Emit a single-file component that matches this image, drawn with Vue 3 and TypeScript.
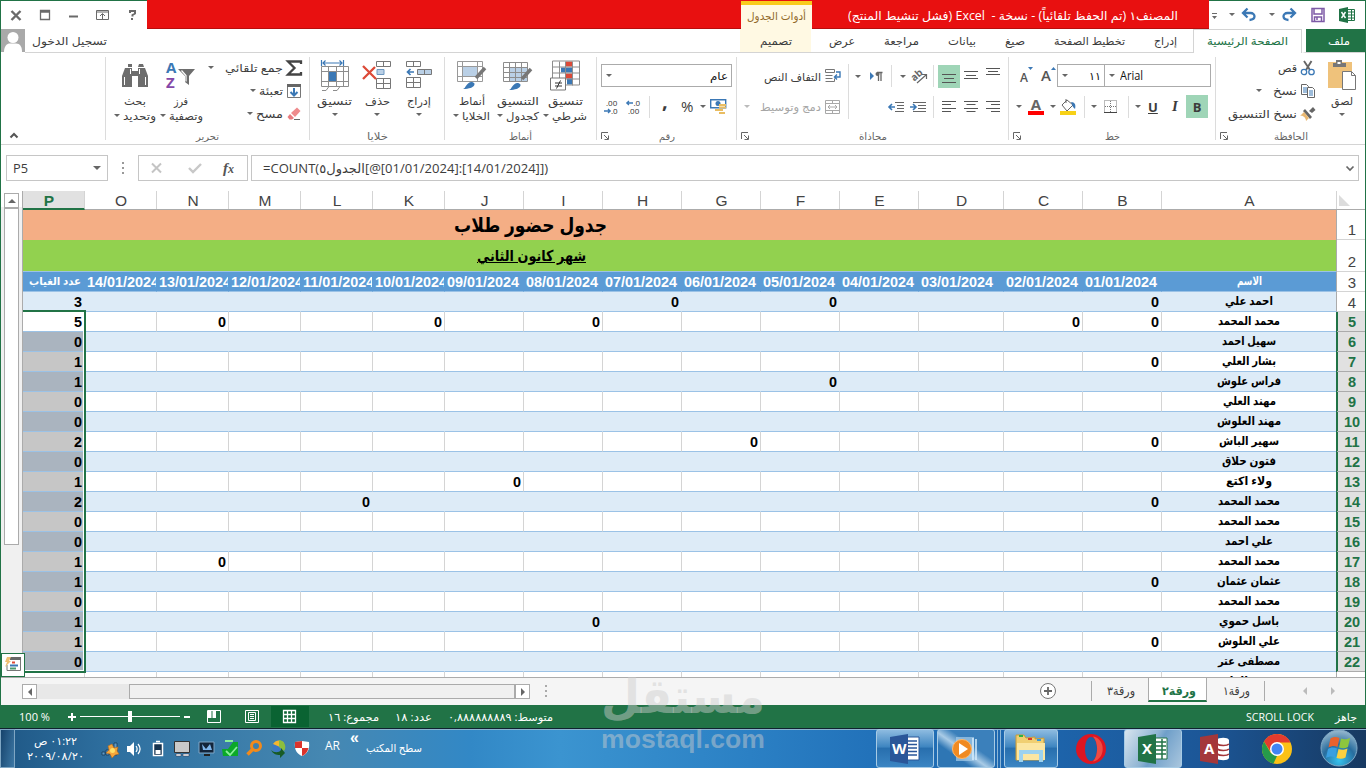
<script setup lang="ts">
interface Row {
  n: number
  name: string
  total: string
  zeros: string
}

const columns = ['P', 'O', 'N', 'M', 'L', 'K', 'J', 'I', 'H', 'G', 'F', 'E', 'D', 'C', 'B', 'A']
const dayColumns = columns.slice(1, 15)

const dates = dayColumns.map((_, i) => {
  const day = String(14 - i).padStart(2, '0')
  return `${day}/01/2024`
})

// zeros lists the columns in which the student was absent
const rows: Row[] = [
  { n: 4, name: 'احمد علي', total: '3', zeros: 'HFB' },
  { n: 5, name: 'محمد المحمد', total: '5', zeros: 'NKICB' },
  { n: 6, name: 'سهيل احمد', total: '0', zeros: '' },
  { n: 7, name: 'بشار العلي', total: '1', zeros: 'B' },
  { n: 8, name: 'فراس علوش', total: '1', zeros: 'F' },
  { n: 9, name: 'مهند العلي', total: '0', zeros: '' },
  { n: 10, name: 'مهند العلوش', total: '0', zeros: '' },
  { n: 11, name: 'سهير الباش', total: '2', zeros: 'GB' },
  { n: 12, name: 'فتون حلاق', total: '0', zeros: '' },
  { n: 13, name: 'ولاء اكتع', total: '1', zeros: 'J' },
  { n: 14, name: 'محمد المحمد', total: '2', zeros: 'LB' },
  { n: 15, name: 'محمد المحمد', total: '0', zeros: '' },
  { n: 16, name: 'علي احمد', total: '0', zeros: '' },
  { n: 17, name: 'محمد المحمد', total: '1', zeros: 'N' },
  { n: 18, name: 'عثمان عثمان', total: '1', zeros: 'B' },
  { n: 19, name: 'محمد المحمد', total: '0', zeros: '' },
  { n: 20, name: 'باسل حموي', total: '1', zeros: 'I' },
  { n: 21, name: 'علي العلوش', total: '1', zeros: 'B' },
  { n: 22, name: 'مصطفى عتر', total: '0', zeros: '' },
  { n: 23, name: 'محمد العلي', total: '1', zeros: 'B' }
]

const nameWidths: Record<number, number> = {
  4: 48, 5: 62, 6: 54, 7: 54, 8: 64, 9: 53, 10: 64, 11: 60, 12: 54, 13: 46,
  14: 62, 15: 62, 16: 48, 17: 62, 18: 64, 19: 62, 20: 60, 21: 62, 22: 62, 23: 62
}

const tabs = [
  { label: 'عرض', width: 26 },
  { label: 'مراجعة', width: 35 },
  { label: 'بيانات', width: 28 },
  { label: 'صيغ', width: 20 },
  { label: 'تخطيط الصفحة', width: 71 },
  { label: 'إدراج', width: 23 }
]

// squeezes or stretches a label to the given width in pixels
const vFit = {
  mounted(el: HTMLElement, binding: { value: number }) {
    const natural = el.getBoundingClientRect().width
    if (!natural) return
    el.style.transform = `scaleX(${binding.value / natural})`
    el.style.marginRight = `${binding.value - natural}px`
  }
}
</script>

<template>
  <div class="screen">
    <div class="excel">
      <header class="title-bar">
        <div class="win-buttons">
          <svg width="146" height="28" viewBox="1 1 146 28" fill="none" stroke="#6a6a6a">
            <path d="M11.500 11l9 9M20.500 11l-9 9" stroke-width="2.400" />
            <path d="M40.500 10.500h9v9h-9zM40 12h10" stroke-width="1.300" />
            <path d="M69 16.500h9" stroke-width="2" />
            <path d="M96.500 10.500h12v9h-12zM96 12h13M102.500 19v-5M100 16l2.500-2.500 2.500 2.500" />
            <path d="M130 13v-2h5v2.500l-2.500 1.500v1.500M132 18v2" stroke-width="2" />
          </svg>
        </div>
        <div class="title-red">
          <div class="context-title"><span v-fit="59" class="t">أدوات الجدول</span></div>
          <span v-fit="330" class="t title-text">المصنف١ (تم الحفظ تلقائياً) - نسخة -&nbsp; Excel (فشل تنشيط المنتج)</span>
        </div>
        <div class="quick-access">
          <svg width="156" height="28" viewBox="1209 1 156 28" fill="none">
            <path d="M1212 13.500h5" stroke="#6a6a6a" />
            <path d="M1212 16h5l-2.500 3zM1229 13h6l-3 3zM1269 13h6l-3 3z" fill="#6a6a6a" />
            <path d="M1247.500 8.500l-4.500 4.500 4.500 4.500M1243.500 13h7c5 0 6 6.500-1 7" stroke="#3b78b5" stroke-width="2.300" />
            <path d="M1290.500 8.500l4.500 4.500-4.500 4.500M1294.500 13h-7c-5 0-6 6.500 1 7" stroke="#3b78b5" stroke-width="2.300" />
            <path d="M1312 8.500h12v13h-12zM1314 9v5h8v-5M1314.500 21v-4h7v4M1317 17v3" stroke="#7d5aa6" stroke-width="1.500" />
            <path d="M1347 9.500h7.500v11h-7.500M1348 12h6M1348 15h6M1348 18h6M1351.500 10v10" stroke="#217346" />
            <path d="M1339 9l9-2v16l-9-2z" fill="#217346" />
            <path d="M1341.500 12l4 6M1345.500 12l-4 6" stroke="#fff" stroke-width="1.400" />
          </svg>
        </div>
      </header>

      <nav class="tab-row">
        <svg class="avatar" width="24" height="23" viewBox="0 0 24 23">
          <path d="M0 0h24v23H0z" fill="#a9a9a9" />
          <circle cx="12" cy="8.500" r="5.500" fill="#fff" />
          <path d="M3 23c0-6 3-8.500 6-8.500h6c4 0 6 3 6 8.500z" fill="#fff" />
        </svg>
        <div class="sign-in"><span v-fit="75" class="t">تسجيل الدخول</span></div>
        <div class="design-tab"><span v-fit="32" class="t">تصميم</span></div>
        <div class="plain-tabs">
          <span v-for="tab in tabs" :key="tab.label" v-fit="tab.width" class="t">{{ tab.label }}</span>
        </div>
        <div class="active-tab"><span v-fit="81" class="t">الصفحة الرئيسية</span></div>
        <div class="file-tab"><span v-fit="22" class="t">ملف</span></div>
      </nav>

      <section class="ribbon">
        <div class="group g-empty">
          <svg width="10" height="7" viewBox="0 0 10 7"><path d="M1.500 5.500L5 2l3.500 3.500" fill="none" stroke="#555" stroke-width="2" /></svg>
        </div>

        <div class="group g-edit">
          <div class="body">
            <div class="big w-find">
              <svg width="28" height="28" viewBox="119 60 28 28" fill="#6d6d6d">
                <path d="M124 66h6v-3h-4v3zM136 66h6l-1-3h-4zM123 67h7v3h6v-3h7l3 8v11h-10v-11h-6v11h-10v-11z" />
                <path d="M122.500 76v8M143.500 76v8M128.500 68v5M137.500 68v5" stroke="#fff" />
              </svg>
              <span v-fit="22" class="t">بحث</span>
              <span class="line2"><i class="dn" /><span v-fit="33" class="t">وتحديد</span></span>
            </div>
            <div class="big w-sort">
              <svg width="30" height="30" viewBox="166 60 30 30">
                <text x="166" y="73" class="az" fill="#3b78b5">A</text>
                <text x="166" y="88" class="az" fill="#8548a8">Z</text>
                <path d="M178 69h17l-6 7v9l-4-3v-6z" fill="#6d6d6d" />
                <path d="M181.500 70.500l4.500 5v6" stroke="#fff" fill="none" stroke-width="1.200" />
              </svg>
              <span v-fit="14" class="t">فرز</span>
              <span class="line2"><i class="dn" /><span v-fit="34" class="t">وتصفية</span></span>
            </div>
            <div class="small-list edit-list">
              <div class="small"><i class="dn far" /><span v-fit="58" class="t">جمع تلقائي</span>
                <svg width="16" height="16" viewBox="0 0 16 16"><path d="M15 4V1.500H2l6.500 6.500L2 14.500h13V12" fill="none" stroke="#444" stroke-width="2.300" /></svg>
              </div>
              <div class="small"><i class="dn" /><span v-fit="24" class="t">تعبئة</span>
                <svg width="16" height="16" viewBox="0 0 16 16" fill="none"><path d="M1.500 1.500h13v13h-13z" stroke="#777" /><path d="M1 1h14v3H1z" fill="#666" /><path d="M8 5v7M4.500 9L8 12.500 11.500 9" stroke="#3b78b5" stroke-width="2" /></svg>
              </div>
              <div class="small"><i class="dn" /><span v-fit="27" class="t">مسح</span>
                <svg width="16" height="16" viewBox="0 0 16 16"><path d="M5 7l6-5.500 3.500 3.500L9 11z" fill="#ee8a8c" /><path d="M4 8l4 4-2 1.500H3.500L1.500 11z" fill="#e87b7e" /><path d="M8 13.500h6" stroke="#666" /></svg>
              </div>
            </div>
          </div>
          <div class="label"><span v-fit="23" class="t">تحرير</span></div>
        </div>

        <div class="group g-cells">
          <div class="body">
            <div class="big w-format">
              <svg width="30" height="32" viewBox="320 59 30 32" fill="none">
                <path d="M321.500 60v6M343.500 60v6M323 63h19M325.500 60.500L323 63l2.500 2.500M339.500 60.500L342 63l-2.500 2.500" stroke="#3b78b5" stroke-width="1.200" />
                <path d="M321.500 66.500h27v20h-27zM321 71.500h28M321 81.500h28M328.500 67v19M336.500 67v19M343.500 67v19M322 90.500h4l3-4M333 90.500h4l3-4" stroke="#8d8d8d" />
                <path d="M329 72h7v9h-7z" fill="#3b78b5" />
              </svg>
              <span v-fit="35" class="t">تنسيق</span><i class="dn" />
            </div>
            <div class="big w-delete">
              <svg width="30" height="30" viewBox="362 60 30 30" fill="none">
                <path d="M376.500 61.500h14v5h-14zM383.500 62v5M376.500 78.500h14v10h-14zM376 83.500h15M383.500 79v9" stroke="#777" />
                <path d="M377 69.500h7v5h-7z" fill="#bad0e6" stroke="#6c97c0" />
                <path d="M363 66l13 13M375 67l-12 12" stroke="#dc4a38" stroke-width="2.300" />
              </svg>
              <span v-fit="25" class="t">حذف</span><i class="dn" />
            </div>
            <div class="big w-insert">
              <svg width="30" height="30" viewBox="404 60 30 30" fill="none">
                <path d="M406.500 61.500h14v5h-14zM413.500 62v5M406.500 77.500h14v10h-14zM406 82.500h15M413.500 78v9" stroke="#777" />
                <path d="M417.500 69.500h14v5h-14zM424.500 70v4" fill="#bad0e6" stroke="#777" />
                <path d="M414 72h-6M410.500 69l-3 3 3 3" stroke="#3b78b5" stroke-width="1.700" />
              </svg>
              <span v-fit="24" class="t">إدراج</span><i class="dn" />
            </div>
          </div>
          <div class="label"><span v-fit="21" class="t">خلايا</span></div>
        </div>

        <div class="group g-styles">
          <div class="body">
            <div class="big w-cellstyle">
              <svg width="30" height="30" viewBox="458 60 30 30" fill="none">
                <path d="M458.500 61.500h25v20h-25zM458 66.500h26M463.500 62v19M458 76.500h26M478.500 62v19" stroke="#999" />
                <path d="M464 67h14v9h-14z" fill="#bad0e6" />
                <path d="M486 68l-9 10" stroke="#777" stroke-width="3.500" />
                <path d="M464 89c3-1 3-6 8-7 6 0 5 7-8 7z" fill="#3b78b5" />
              </svg>
              <span v-fit="26" class="t">أنماط</span>
              <span class="line2"><i class="dn" /><span v-fit="28" class="t">الخلايا</span></span>
            </div>
            <div class="big w-tablestyle">
              <svg width="30" height="30" viewBox="504 61 30 30" fill="none">
                <path d="M511 69h18v13h-18z" fill="#bad0e6" />
                <path d="M504.500 63.500h24v19h-24zM504 68.500h25M504 73.500h25M504 78.500h25M510.500 64v19M516.500 64v19M522.500 64v19" stroke="#8d8d8d" />
                <path d="M532 70l-9 10" stroke="#777" stroke-width="3.500" />
                <path d="M510 91c3-1 3-6 8-7 6 0 5 7-8 7z" fill="#3b78b5" />
              </svg>
              <span v-fit="42" class="t">التنسيق</span>
              <span class="line2"><i class="dn" /><span v-fit="33" class="t">كجدول</span></span>
            </div>
            <div class="big w-cond">
              <svg width="30" height="31" viewBox="550 60 30 31" fill="none">
                <path d="M566 62h6v5h-6zM566 74h6v5h-6z" fill="#dc4a38" />
                <path d="M561 68h11v5h-11zM567 79h5v6h-5z" fill="#3b78b5" />
                <path d="M552.500 61.500h27v24h-27zM552 67.500h28M552 73.500h28M552 79.500h28M559.500 62v24M565.500 62v24M572.500 62v24" stroke="#8d8d8d" />
                <path d="M550.500 78.500h15v12h-15z" fill="#fff" stroke="#777" />
                <path d="M555 83.500h7M555 86.500h7M560.500 81l-4 8" stroke="#333" />
              </svg>
              <span v-fit="35" class="t">تنسيق</span>
              <span class="line2"><i class="dn" /><span v-fit="35" class="t">شرطي</span></span>
            </div>
          </div>
          <div class="label"><span v-fit="23" class="t">أنماط</span></div>
        </div>

        <div class="group g-number">
          <div class="body stack">
            <div class="select num-select"><i class="dn" /><span v-fit="18" class="t dark">عام</span></div>
            <div class="tools num-tools">
              <svg width="16" height="16" viewBox="0 0 16 16"><text x="2" y="7" class="dec">.00</text><text x="7" y="15" class="dec">.0</text><path d="M0 12h6M4 10l2.200 2L4 14" fill="none" stroke="#3b78b5" stroke-width="1.300" /></svg>
              <svg width="16" height="16" viewBox="0 0 16 16"><text x="7.500" y="7" class="dec">.0</text><text x="2" y="15" class="dec">.00</text><path d="M7 4H1M3 2L.8 4 3 6" fill="none" stroke="#3b78b5" stroke-width="1.300" /></svg>
              <b class="sep" />
              <span class="glyph comma">,</span>
              <span class="glyph">%</span>
              <i class="dn" />
              <svg width="17" height="17" viewBox="0 0 17 17"><path d="M.7 1.700h15v8H.7z" fill="#fff" stroke="#3b78b5" stroke-width="1.400" /><circle cx="8" cy="5.500" r="2.500" fill="#3b78b5" /><path d="M9 7h7M9 9.500h7M5 12h8M9 15h6" stroke="#e9bd62" stroke-width="2" /></svg>
            </div>
          </div>
          <div class="label"><span v-fit="16" class="t">رقم</span></div>
          <svg class="launcher" viewBox="0 0 8 8"><path d="M.5 7V.5H7M3 3l4 4M7.500 3.500v4h-4" fill="none" stroke="#666" /></svg>
        </div>

        <div class="group g-align">
          <div class="body stack">
            <div class="tools align1">
              <span v-fit="57" class="t">التفاف النص</span>
              <svg width="16" height="16" viewBox="0 0 16 16" fill="none"><path d="M.5 1.500h9v3h-9zM.5 7.500h7M.5 10.500h7M.5 13.500h9v-3" stroke="#777" /><path d="M11 4h4v5h-5M12 6.500L9.500 9l2.500 2.500" stroke="#3b78b5" stroke-width="1.400" /></svg>
              <b class="sep long" />
              <i class="dn" />
              <svg width="14" height="12" viewBox="0 0 14 12"><path d="M1 2l4 4-4 4z" fill="#3b78b5" /><path d="M8 2.500h5.500M9.500 2v9M12 2v9" stroke="#666" stroke-width="1.300" /><circle cx="8.500" cy="4" r="2" fill="#666" /></svg>
              <b class="sep" />
              <i class="dn" />
              <svg width="17" height="16" viewBox="0 0 17 16"><text x="1" y="10" class="ab" transform="rotate(-42 7 9)">ab</text><path d="M6 15l9-8M11 6.500h4.500V11" fill="none" stroke="#666" stroke-width="1.200" /></svg>
              <b class="sep" />
              <span class="on"><svg width="14" height="16" viewBox="0 0 14 16"><path d="M0 6.500h14M2 10.500h10M0 14.500h14" stroke="#555" /></svg></span>
              <svg width="14" height="16" viewBox="0 0 14 16"><path d="M0 3.500h14M2 7.500h10M0 10.500h14" stroke="#555" /></svg>
              <svg width="14" height="16" viewBox="0 0 14 16"><path d="M0 .5h14M2 3.500h10M0 6.500h14" stroke="#555" /></svg>
            </div>
            <div class="tools align2">
              <i class="dn pale" />
              <span v-fit="61" class="t pale-text">دمج وتوسيط</span>
              <svg width="16" height="16" viewBox="0 0 16 16" fill="none"><path d="M.5 1.500h14v13H.5zM.5 4.500h14M.5 11.500h14M7.500 1.500v3M7.500 11.500v3M3 8h9M5 6L3 8l2 2M10 6l2 2-2 2" stroke="#a8a8a8" /></svg>
              <svg width="16" height="14" viewBox="0 0 16 14"><path d="M7 2.500h9M9 5.500h7M9 8.500h7M7 11.500h9" stroke="#666" /><path d="M7 7H1M4 4L1 7l3 3" fill="none" stroke="#3b78b5" stroke-width="1.600" /></svg>
              <svg width="16" height="14" viewBox="0 0 16 14"><path d="M3 2.500h13M8 5.500h8M8 8.500h8M3 11.500h13" stroke="#666" /><path d="M0 7h6M3 4l3 3-3 3" fill="none" stroke="#3b78b5" stroke-width="1.600" /></svg>
              <b class="sep" />
              <svg width="14" height="12" viewBox="0 0 14 12"><path d="M0 .5h14M0 3.500h9M0 7.500h14M0 10.500h9" stroke="#555" /></svg>
              <svg width="14" height="12" viewBox="0 0 14 12"><path d="M0 .5h14M2.500 3.500h9M0 7.500h14M2.500 10.500h9" stroke="#555" /></svg>
              <svg width="14" height="12" viewBox="0 0 14 12"><path d="M0 .5h14M5 3.500h9M0 7.500h14M5 10.500h9" stroke="#555" /></svg>
            </div>
          </div>
          <div class="label"><span v-fit="28" class="t">محاذاة</span></div>
          <svg class="launcher" viewBox="0 0 8 8"><path d="M.5 7V.5H7M3 3l4 4M7.500 3.500v4h-4" fill="none" stroke="#666" /></svg>
        </div>

        <div class="group g-font">
          <div class="body stack">
            <div class="tools font1">
              <span class="letter small-a">A<svg width="5" height="3"><path d="M0 0h5L2.500 3z" fill="#3b78b5" /></svg></span>
              <span class="letter">A<svg width="5" height="3"><path d="M0 3h5L2.500 0z" fill="#3b78b5" /></svg></span>
              <div class="select size-select"><i class="dn" /><span v-fit="12" class="t dark">١١</span></div>
              <div class="select font-select"><i class="dn" /><span v-fit="23" class="t dark latin">Arial</span></div>
            </div>
            <div class="tools font2">
              <i class="dn" />
              <span class="font-color">A</span>
              <i class="dn" />
              <svg width="17" height="17" viewBox="0 0 17 17"><path d="M2 7l5-5 6 5-6 6z" fill="#fff" stroke="#666" /><path d="M6 5V1" stroke="#666" /><path d="M11 4c4 0 5 3 4 7l-2-2z" fill="#3b78b5" /><path d="M0 13h16v4H0z" fill="#f7d117" /></svg>
              <b class="sep" />
              <i class="dn" />
              <svg width="14" height="14" viewBox="0 0 14 14" fill="none"><path d="M.5.5h12v12H.5zM6.500 1v12M1 6.500h12" stroke="#777" stroke-dasharray="1 1" /><path d="M0 12.500h13" stroke="#444" /></svg>
              <b class="sep" />
              <i class="dn" />
              <span class="letter-btn u">U</span>
              <span class="letter-btn it">I</span>
              <span class="letter-btn on">B</span>
            </div>
          </div>
          <div class="label"><span v-fit="15" class="t">خط</span></div>
          <svg class="launcher" viewBox="0 0 8 8"><path d="M.5 7V.5H7M3 3l4 4M7.500 3.500v4h-4" fill="none" stroke="#666" /></svg>
        </div>

        <div class="group g-clip">
          <div class="body">
            <div class="small-list clip-list">
              <div class="small"><span v-fit="19" class="t">قص</span>
                <svg width="16" height="16" viewBox="0 0 16 16" fill="none"><path d="M4 1l6 9M11.500 1L6 10" stroke="#666" stroke-width="1.900" /><circle cx="4" cy="12" r="2.700" stroke="#3b78b5" stroke-width="1.300" /><circle cx="11.500" cy="12" r="2.700" stroke="#3b78b5" stroke-width="1.300" /></svg>
              </div>
              <div class="small"><i class="dn far" /><span v-fit="24" class="t">نسخ</span>
                <svg width="16" height="16" viewBox="0 0 16 16" fill="#fff" stroke="#666"><path d="M1.500 1.500h5l2 2v8h-7z" /><path d="M7.500 4.500h5l2 2v8h-7z" /><path d="M3 5h4M3 7h4M3 9h4M9 8h4M9 10h4M9 12h4" stroke="#3b78b5" /></svg>
              </div>
              <div class="small"><span v-fit="69" class="t">نسخ التنسيق</span>
                <svg width="16" height="16" viewBox="0 0 16 16"><path d="M9 5l4-4 2.500 3L12 7z" fill="#666" /><path d="M5 3l7 8-2 2-7-8z" fill="#666" /><path d="M4 6l5 6-3 3c0-3-3-6-6-5z" fill="#e9b872" /></svg>
              </div>
            </div>
            <div class="big w-paste">
              <svg width="30" height="32" viewBox="1327 60 30 32">
                <path d="M1328 63h24v26h-24z" fill="#efc27b" />
                <path d="M1333 68v-4h3v-3h6v3h4v4z" fill="#777" /><path d="M1337.500 63h3v2h-3z" fill="#fff" />
                <path d="M1342.500 72.500h9l4 4v14h-13z" fill="#fff" stroke="#777" /><path d="M1351.500 72.500v4h4" fill="none" stroke="#777" />
              </svg>
              <span v-fit="22" class="t">لصق</span><i class="dn" />
            </div>
          </div>
          <div class="label"><span v-fit="34" class="t">الحافظة</span></div>
          <svg class="launcher" viewBox="0 0 8 8"><path d="M.5 7V.5H7M3 3l4 4M7.500 3.500v4h-4" fill="none" stroke="#666" /></svg>
        </div>
      </section>

      <section class="formula-bar">
        <div class="name-box"><span v-fit="15" class="t ltr">P5</span><i class="dn big-dn" /></div>
        <svg width="4" height="14" viewBox="0 0 4 14" class="dots"><path d="M1 2h2M1 7h2M1 12h2" stroke="#999" stroke-width="2" /></svg>
        <div class="fx-box">
          <svg width="12" height="12" viewBox="0 0 12 12"><path d="M1 1.500l9 9M10 1.500l-9 9" stroke="#c4c4c4" stroke-width="2" /></svg>
          <svg width="14" height="12" viewBox="0 0 14 12"><path d="M1 6l4 4 8-8" fill="none" stroke="#c8c8c8" stroke-width="2.400" /></svg>
          <span class="fx">f<small>x</small></span>
        </div>
        <div class="formula">
          <span v-fit="285" class="t ltr">=COUNT(<bdi>الجدول٥</bdi>[@[01/01/2024]:[14/01/2024]])</span>
          <svg width="10" height="7" viewBox="0 0 10 7"><path d="M1.500 1.500L5 5l3.500-3.500" fill="none" stroke="#666" stroke-width="1.700" /></svg>
        </div>
      </section>

      <section class="sheet">
        <div class="v-scroll">
          <div class="up"><i /></div>
          <div class="thumb" />
        </div>
        <div class="grid">
          <div class="row head">
            <div v-for="c in columns" :key="c" :class="['col', { sel: c === 'P' }]">{{ c }}</div>
            <div class="corner" />
          </div>
          <div class="merged orange"><div><span v-fit="153" class="t">جدول حضور طلاب</span></div><b>1</b></div>
          <div class="merged green"><div><span v-fit="109" class="t">شهر كانون الثاني</span></div><b>2</b></div>
          <div class="row titles">
            <div class="total-title"><span v-fit="52" class="t">عدد الغياب</span></div>
            <div v-for="d in dates" :key="d" class="date">{{ d }}</div>
            <div class="name"><span v-fit="25" class="t">الاسم</span></div>
            <div class="num">3</div>
          </div>
          <div v-for="r in rows" :key="r.n" :class="['row', 'data', { band: r.n % 2 === 0, picked: r.n > 5 && r.n < 23 }]">
            <div class="total">{{ r.total }}</div>
            <div v-for="c in dayColumns" :key="c" class="cell">{{ r.zeros.includes(c) ? '0' : '' }}</div>
            <div class="name"><span v-fit="nameWidths[r.n]" class="t">{{ r.name }}</span></div>
            <div :class="['num', { sel: r.n > 4 && r.n < 23 }]">{{ r.n }}</div>
          </div>
          <div class="selection" />
        </div>
        <div class="quick-analysis">
          <svg width="18" height="18" viewBox="0 0 18 18"><path d="M6 1.500h10.500v13H3V9" fill="none" stroke="#777" /><path d="M6 1h11v3H6z" fill="#666" /><path d="M8 6.500h3" stroke="#dc4a38" stroke-width="2" /><path d="M6 9.500h8" stroke="#3b78b5" stroke-width="2" /><path d="M6 12.500h6" stroke="#4c9c6f" stroke-width="2" /><path d="M3 1h4L5 5h2l-6 6 2-5H1z" fill="#f0bf72" /></svg>
        </div>
      </section>

      <section class="sheet-bar">
        <div class="h-btn"><i class="left" /></div>
        <div class="h-track" />
        <div class="h-thumb" />
        <div class="h-btn"><i class="right" /></div>
        <svg width="4" height="14" viewBox="0 0 4 14" class="bar-dots"><path d="M1 2h2M1 7h2M1 12h2" stroke="#aaa" stroke-width="2" /></svg>
        <svg width="18" height="18" viewBox="0 0 18 18" class="add"><circle cx="9" cy="9" r="7.500" fill="#fff" stroke="#777" /><path d="M5 9h8M9 5v8" stroke="#666" stroke-width="1.800" /></svg>
        <div class="sheet-tab third"><span v-fit="28" class="t">ورقة٣</span></div>
        <div class="sheet-tab current"><span v-fit="34" class="t">ورقة٢</span></div>
        <div class="sheet-tab first"><span v-fit="27" class="t">ورقة١</span></div>
        <div class="sheet-nav"><i class="left" /><i class="right" /></div>
      </section>

      <footer class="status-bar">
        <span v-fit="31" class="t ltr">100 %</span>
        <svg width="122" height="22" viewBox="70 705 122 22" stroke="#fff" fill="none"><path d="M68 716h8M72 712v8M184 716h6" stroke-width="2" /><path d="M80 715.500h100" /><path d="M128 710h4v11h-4z" fill="#fff" stroke="none" /></svg>
        <svg class="view-breaks" width="14" height="14" viewBox="0 0 14 14" fill="none" stroke="#fff"><path d="M.5.5h13v12H.5z" /><path d="M1 1h3.500v7H1zM5.500 1H9v7H5.500z" fill="#fff" stroke="none" /></svg>
        <svg class="view-page" width="14" height="14" viewBox="0 0 14 14" fill="none" stroke="#fff"><path d="M.5.5h13v12H.5zM3.500 2.500h7v8h-7zM5 4.500h4M5 6.500h4M5 8.500h4" /></svg>
        <div class="view-normal"><svg width="14" height="14" viewBox="0 0 14 14" fill="none" stroke="#fff"><path d="M.5.5h12v12H.5zM4.500 1v12M8.500 1v12M1 4.500h12M1 8.500h12" stroke-width="1.300" /></svg></div>
        <span v-fit="51" class="t sum">مجموع: ١٦</span>
        <span v-fit="37" class="t count">عدد: ١٨</span>
        <span v-fit="105" class="t average">متوسط: ٠,٨٨٨٨٨٨٨٨٩</span>
        <span class="grow" />
        <span v-fit="68" class="t ltr scroll-lock">SCROLL LOCK</span>
        <span v-fit="22" class="t ready">جاهز</span>
      </footer>
    </div>

    <footer class="taskbar">
      <div class="show-desktop" />
      <div class="clock">
        <span v-fit="43" class="t">٠١:٢٢ ص</span>
        <span v-fit="57" class="t ltr">٢٠٠٩/٠٨/٢٠</span>
      </div>
      <svg class="tray" width="214" height="20" viewBox="100 738 214 20">
        <path d="M102 755v-3h3v3zM106 755v-5h3v5zM110 755v-8h3v8zM114 755v-12h3v12z" fill="#5d9ac8" stroke="#16334f" stroke-width=".7" />
        <path d="M112 744l2 4 4-1-1 4 2 3-4 1-3 3-2-4-4-1 3-3-1-4z" fill="#f5a63a" stroke="#b66a1c" stroke-width=".6" /><circle cx="112.500" cy="750.500" r="2.500" fill="#ffe066" />
        <path d="M127 746h3l4-4v14l-4-4h-3z" fill="#fff" /><path d="M136 746c1.500 2 1.500 4 0 6M138 744c2.500 3 2.500 7 0 10" stroke="#fff" fill="none" stroke-width="1.200" />
        <path d="M153.500 743.500h9v12h-9zM156 741.500h4" fill="#16334f" stroke="#fff" stroke-width="1.500" /><path d="M155.500 750h5v4h-5z" fill="#fff" />
        <path d="M174.500 741.500h15v11h-15z" fill="#c9c9c9" stroke="#333" /><path d="M176 754h5v2h-5zM183 754h6v2h-6z" fill="#fff" stroke="#334" stroke-width=".5" />
        <path d="M199 742h15v11h-15z" fill="#12243a" stroke="#7fa6c6" /><path d="M202 744l4 5 4-5 2 6h-9z" fill="#7db4ea" /><path d="M204 755h6" stroke="#222" stroke-width="2" />
        <path d="M222 749h6l5-7h5v14h-15z" fill="#0ba928" /><path d="M225 741h8M226 751l4 4 7-8" stroke="#8af09a" fill="none" stroke-width="1.800" />
        <circle cx="256" cy="746" r="4.500" fill="none" stroke="#f28a1b" stroke-width="3" /><path d="M252.500 749.500l-5 5" stroke="#f28a1b" stroke-width="3.500" />
        <circle cx="279" cy="747" r="6.500" fill="#3b78c4" /><path d="M273 744c3-5 9-4 11-1l-4 4z" fill="#f4b62f" /><path d="M279 740c6 1 8 7 5 11l-5-4z" fill="#8cbe3e" /><path d="M271 750c3 3 8 3 10 0v-2l4 5-5 5v-3c-4 0-7-1-9-5z" fill="#175b26" />
        <path d="M295 742l7-1 7 1c1 8-2 12-7 14-5-2-8-6-7-14z" fill="#fff" /><path d="M295 742l7-1v7h-7zM302 748h6.500c-1 4-3 6.500-6.500 8z" fill="#dc332c" />
      </svg>
      <span v-fit="15" class="t ltr lang">AR</span>
      <span class="chevron">«</span>
      <span v-fit="56" class="t desktop-label">سطح المكتب</span>
      <span class="grow" />
      <div class="task open">
        <svg width="32" height="32" viewBox="0 0 32 32"><path d="M17 4h13v23H17z" fill="#fff" stroke="#2a5699" /><path d="M19 8h9M19 11.500h9M19 15h9M19 18.500h9M19 22h9" stroke="#2a5699" stroke-width="1.500" /><path d="M1 4l18-3v30L1 28z" fill="#2a5699" /><text x="3" y="21" class="app-letter">W</text></svg>
      </div>
      <div class="task open shine">
        <svg width="32" height="32" viewBox="0 0 32 32"><path d="M6 4h18v24H6z" fill="#a6cdea" opacity=".7" /><path d="M23 5v22M26 6v21" stroke="#d5ecfb" stroke-width="1.500" /><circle cx="12" cy="16" r="9.500" fill="#f08a22" stroke="#ffb869" /><path d="M9 10l9 6-9 6z" fill="#fff" /></svg>
      </div>
      <div class="task-edge" />
      <div class="task open explorer">
        <svg width="34" height="32" viewBox="0 0 34 32"><path d="M2 5V2h8l2 3 9-1v2l9-1v22H2z" fill="#f0cf72" stroke="#c99c3b" /><path d="M3 10h28v17H3z" fill="#fbe6a2" /><path d="M5 3h4" stroke="#2fb344" stroke-width="2" /><path d="M14 6h4" stroke="#d9372b" stroke-width="2" /><path d="M23 7h4" stroke="#3498d8" stroke-width="2" /><path d="M7 29V19h20v10" fill="none" stroke="#9dd2ee" stroke-width="4" /></svg>
      </div>
      <div class="task opera">
        <svg width="32" height="32" viewBox="0 0 32 32"><path fill-rule="evenodd" d="M16 1a15 15 0 1 0 0 30 15 15 0 1 0 0-30zM16 4c4 0 6 6 6 12s-2 12-6 12-6-6-6-12 2-12 6-12z" fill="#dd1622" /><path d="M18 3.500c13 2 13 23 0 25 5.500-6 5.500-19 0-25z" fill="#ef4b43" /></svg>
      </div>
      <div class="task open active">
        <svg width="32" height="32" viewBox="0 0 32 32"><path d="M18 5h12v21H18z" fill="#fff" stroke="#217346" /><path d="M19 9h10M19 13h10M19 17h10M19 21h10M25 6v20" stroke="#217346" stroke-width="1.500" /><path d="M1 4l18-3v30L1 28z" fill="#217346" /><text x="5" y="21" class="app-letter">X</text></svg>
      </div>
      <div class="task access">
        <svg width="32" height="32" viewBox="0 0 32 32"><path d="M17 7c3-3 12-3 13 0v18c-1 3-10 3-13 0z" fill="#fff" /><path d="M18 11c3 2 10 2 12 0M18 16c3 2 10 2 12 0M18 21c3 2 10 2 12 0" fill="none" stroke="#a4373a" stroke-width="1.700" /><path d="M1 4l18-3v30L1 28z" fill="#a4373a" /><text x="5" y="21" class="app-letter">A</text></svg>
      </div>
      <div class="task chrome">
        <svg width="32" height="32" viewBox="0 0 32 32"><circle cx="16" cy="16" r="15" fill="#fbc116" /><path d="M3 8.500A15 15 0 0 1 29.500 9.500H16l-6.500 9z" fill="#e33b2e" /><path d="M3 8.500L9.800 20l6.200 3-3.500 7.600A15 15 0 0 1 3 8.500z" fill="#269a4a" /><circle cx="16" cy="16" r="7" fill="#fff" /><circle cx="16" cy="16" r="5.500" fill="#4285f4" /></svg>
      </div>
      <svg class="orb" width="40" height="38" viewBox="0 0 40 38">
        <defs><radialGradient id="orb" cx=".5" cy=".85" r=".9"><stop offset="0" stop-color="#35c2ee" /><stop offset=".5" stop-color="#286d9e" /><stop offset="1" stop-color="#a9c4d6" /></radialGradient></defs>
        <circle cx="20" cy="19" r="18" fill="url(#orb)" stroke="#7fa9c6" />
        <path d="M11.500 9.500c3-2 5.500-2 9-.5l-2 9c-3-1.500-5.500-1.300-9 .5z" fill="#e8622c" /><path d="M22 9.500c3 1.300 5.500 1 9-.5l-2 9c-3 1.500-5.500 1.500-9 .5z" fill="#8cc63e" /><path d="M9 20c3-2 5.500-2 9-.5l-2 9c-3-1.500-5.500-1.300-9 .5z" fill="#3a9fe0" /><path d="M19.500 20c3 1.300 5.500 1 9-.5l-2 9c-3 1.500-5.500 1.500-9 .5z" fill="#fcd03f" />
      </svg>
    </footer>

    <div class="watermark">
      <span v-fit="164" class="t wm-ar">مستقل</span>
      <span v-fit="164" class="t ltr wm-en">mostaql.com</span>
    </div>
  </div>
</template>

<style>
body {
  margin: 0;
  overflow: hidden;
}
</style>

<style scoped>
.screen {
  position: relative;
  width: 1366px;
  height: 768px;
  overflow: hidden;
  background: #fff;
  color: #3c3c3c;
  font-family: 'Open Sans', 'DejaVu Sans', sans-serif;
  font-size: 11px;
  line-height: 15px;
}

.screen * {
  box-sizing: border-box;
}

svg {
  display: block;
  flex: none;
  overflow: visible;
}

.t {
  display: inline-block;
  flex: none;
  justify-self: start;
  white-space: nowrap;
  direction: rtl;
  transform-origin: 0 50%;
}

.ltr {
  direction: ltr;
}

.grow {
  flex: 1;
}

.excel {
  height: 728px;
  border: solid #217346;
  border-width: 1px 1px 0;
}

/* title bar */
.title-bar {
  display: flex;
  height: 28px;
}

.win-buttons {
  width: 146px;
}

.title-red {
  display: flex;
  width: 1062px;
  height: 29px;
  margin-top: -1px;
  padding-left: 594px;
  background: #e81010;
  border-bottom: 1px solid #b80d0d;
}

.context-title {
  width: 71px;
  height: 28px;
  margin: 1px 36px 0 0;
  padding: 3px 0 0 6px;
  border-top: 4px solid #f9cb1c;
  background: #fff9e3;
  color: #91692b;
}

.title-text {
  margin-top: 8px;
  color: #fff;
  font-size: 12px;
}

/* tabs */
.tab-row {
  display: flex;
  height: 24px;
  line-height: 24px;
}

.tab-row > div {
  border-bottom: 1px solid #d4d4d4;
}

.sign-in {
  width: 715px;
  padding-left: 7px;
}

.design-tab {
  width: 71px;
  padding-left: 20px;
  background: #fff9e3;
}

.plain-tabs {
  display: flex;
  gap: 29px;
  width: 382px;
  padding-left: 18px;
}

.tab-row > .active-tab {
  width: 109px;
  padding-left: 13px;
  border: 1px solid #d4d4d4;
  border-bottom: 0;
  line-height: 22px;
  color: #217346;
}

.file-tab {
  width: 63px;
  padding-left: 22px;
  border-left: 4px solid #fff;
  background: #217346;
  color: #fff;
}

/* ribbon */
.ribbon {
  display: flex;
  height: 92px;
  padding-top: 4px;
  border-bottom: 1px solid #d4d4d4;
}

.group {
  position: relative;
  display: flex;
  flex: none;
  flex-direction: column;
  height: 83px;
  border-right: 1px solid #dcdcdc;
}

.g-empty {
  justify-content: flex-end;
  width: 105px;
  padding: 0 0 1px 8px;
}

.g-edit {
  width: 204px;
}

.g-cells {
  width: 135px;
}

.g-styles {
  width: 152px;
}

.g-number {
  width: 140px;
}

.g-align {
  width: 272px;
}

.g-font {
  width: 207px;
}

.g-clip {
  width: 149px;
  border-right: 0;
}

.body {
  display: flex;
  height: 71px;
}

.stack {
  flex-direction: column;
}

.label {
  display: flex;
  justify-content: center;
  line-height: 16px;
  height: 12px;
  color: #666;
  font-size: 10px;
}

.launcher {
  position: absolute;
  left: 4px;
  bottom: 0;
  width: 8px;
  height: 8px;
}

.big {
  display: flex;
  flex: none;
  flex-direction: column;
  align-items: center;
}

.big > svg {
  height: 32px;
  margin: 2px 0;
}

.big > .dn {
  margin-top: 5px;
}

.line2 {
  display: flex;
  align-items: center;
  gap: 3px;
}

.w-find {
  width: 57px;
}

.w-sort {
  width: 36px;
}

.w-format {
  width: 51px;
  padding-right: 2px;
}

.w-delete {
  width: 34px;
  padding-right: 2px;
}

.w-insert {
  width: 48px;
}

.w-cellstyle {
  width: 53px;
}

.w-tablestyle {
  width: 42px;
  margin-left: -1px;
}

.w-cond {
  width: 52px;
}

.w-paste {
  width: 40px;
  margin-left: 6px;
}

.dn {
  flex: none;
  width: 0;
  height: 0;
  border: 3px solid transparent;
  border-top-color: #666;
  border-bottom: 0;
}

.dn.pale {
  border-top-color: #bbb;
}

.big-dn {
  border-width: 4px 4px 0;
}

.small-list {
  display: flex;
  flex-direction: column;
  width: 103px;
  margin-top: -1px;
}

.clip-list {
  width: 100px;
}

.small {
  display: flex;
  align-items: center;
  justify-content: flex-end;
  gap: 3px;
  height: 23px;
}

.small .far {
  margin-right: 8px;
}

.az {
  font: bold 15px 'Open Sans', sans-serif;
}

.dec {
  font: 8px 'Open Sans', sans-serif;
  fill: #333;
}

.ab {
  font: bold 10px 'Open Sans', sans-serif;
  fill: #666;
}

.select {
  display: flex;
  align-items: center;
  justify-content: space-between;
  height: 23px;
  padding: 0 3px 0 4px;
  border: 1px solid #ababab;
}

.dark {
  color: #111;
}

.num-select {
  width: 131px;
  margin: 7px 0 8px 4px;
}

.tools {
  display: grid;
  align-items: center;
  height: 23px;
}

.num-tools {
  grid-template-columns: 22px 23px 9px 23px 19px 10px 17px;
  padding-left: 7px;
}

.sep {
  width: 1px;
  height: 22px;
  background: #dcdcdc;
}

.long {
  height: 55px;
  margin-bottom: -31px;
}

.glyph {
  font-size: 15px;
}

.comma {
  padding-left: 4px;
  margin-top: -12px;
  font-size: 20px;
  font-weight: bold;
}

.align1 {
  grid-template-columns: 61px 23px 7px 14px 22px 9px 11px 22px 5px 26px 22px 14px;
  margin: 7px 0 8px;
  padding-left: 27px;
}

.align2 {
  grid-template-columns: 16px 65px 63px 22px 23px 9px 22px 22px 14px;
  padding-left: 7px;
}

.pale-text {
  color: #a6a6a6;
}

.on {
  display: flex;
  align-items: center;
  justify-content: center;
  width: 22px;
  height: 23px;
  background: #9fd5b7;
}

.font1 {
  grid-template-columns: 21px 16px 47px 107px;
  margin: 7px 0 8px;
  padding-left: 11px;
}

.size-select {
  border-right: 0;
}

.font-select {
  justify-content: flex-start;
  gap: 5px;
}

.latin {
  font-size: 13px;
}

.letter {
  display: flex;
  height: 18px;
  font: 600 15px/17px 'Open Sans', sans-serif;
  color: #555;
}

.small-a {
  font-size: 12px;
  line-height: 21px;
}

.font2 {
  grid-template-columns: 12px 22px 10px 24px 7px 13px 24px 7px 13px 20px 18px 22px;
  padding-left: 7px;
}

.font-color {
  width: 16px;
  height: 17px;
  border-bottom: 4px solid #f00;
  font: bold 15px/12px 'Open Sans', sans-serif;
  color: #666;
  text-align: center;
}

.letter-btn {
  font: bold 13px 'Open Sans', sans-serif;
}

.u {
  text-decoration: underline;
}

.it {
  font-family: 'Liberation Serif', serif;
  font-style: italic;
  font-size: 15px;
  padding-left: 4px;
}

/* formula bar */
.formula-bar {
  display: flex;
  align-items: flex-start;
  height: 46px;
  padding: 10px 0 0 5px;
  font-size: 13px;
}

.name-box {
  display: flex;
  align-items: center;
  justify-content: space-between;
  width: 102px;
  height: 26px;
  padding: 0 6px;
  border: 1px solid #c6c6c6;
}

.dots {
  margin: 6px 13px 0;
}

.fx-box {
  display: flex;
  align-items: center;
  gap: 25px;
  width: 110px;
  height: 26px;
  margin-right: 3px;
  padding-left: 12px;
  border: 1px solid #c6c6c6;
}

.fx {
  position: relative;
  left: -4px;
  font: italic bold 15px 'Liberation Serif', serif;
  color: #555;
}

.fx small {
  font-size: 12px;
}

.formula {
  display: flex;
  align-items: center;
  justify-content: space-between;
  width: 1108px;
  height: 26px;
  padding: 0 3px 0 11px;
  border: 1px solid #c6c6c6;
}

/* sheet */
.sheet {
  position: relative;
  display: flex;
  height: 487px;
  overflow: hidden;
  border-bottom: 1px solid #ababab;
}

.v-scroll {
  display: flex;
  flex-direction: column;
  width: 21px;
  height: 486px;
  padding: 2px 3px 0;
  background: linear-gradient(#fff 16px, #f0f0f0 16px);
}

.up {
  display: flex;
  align-items: center;
  justify-content: center;
  width: 15px;
  height: 15px;
  border: 1px solid #ababab;
  background: #fff;
}

.up i {
  border: 4px solid transparent;
  border-top: 0;
  border-bottom-color: #666;
}

.thumb {
  width: 15px;
  height: 337px;
  border: 1px solid #ababab;
  background: #fff;
}

.grid {
  position: relative;
  width: 1343px;
  border-left: 1px solid #ababab;
  font: bold 14.400px/19px 'Liberation Sans', 'DejaVu Sans', sans-serif;
  color: #000;
}

.row {
  display: grid;
  grid-template-columns: 62px 72px 72px 72px 72px 72px 79px 79px 79px 79px 79px 79px 85px 79px 79px 175px 28px;
  height: 20px;
}

.head {
  height: 19px;
  border-bottom: 1px solid #ababab;
  font-size: 15.500px;
  font-weight: normal;
  line-height: 20px;
}

.col {
  height: 18px;
  padding-left: 1px;
  border-right: 1px solid #d4d4d4;
  color: #444;
  text-align: center;
}

.col.sel {
  height: 19px;
  padding-right: 10px;
  border-bottom: 2px solid #217346;
  background: #e1e1e1;
  color: #217346;
  font-weight: bold;
}

.corner {
  width: 0;
  height: 0;
  margin: 4px 0 0 2px;
  border-left: 11px solid #dcdcdc;
  border-top: 11px solid transparent;
}

.merged {
  display: flex;
  height: 30px;
}

.merged > div {
  display: flex;
  width: 1314px;
  border-right: 1px solid #ababab;
}

.merged b {
  align-self: flex-end;
  width: 28px;
  border-bottom: 1px solid #d4d4d4;
  padding-left: 2px;
  color: #444;
  font-size: 15px;
  font-weight: normal;
  line-height: 19px;
  text-align: center;
}

.orange > div {
  padding-left: 431px;
  background: #f4ae85;
  font-size: 20px;
  line-height: 30px;
}

.merged.green {
  height: 32px;
}

.green > div {
  padding-left: 454px;
  border-bottom: 1px solid #9bc2e6;
  background: #92d14f;
  font-size: 15px;
  line-height: 31px;
}

.green .t {
  text-decoration: underline;
}

.titles > div:not(.num) {
  overflow: hidden;
  border-bottom: 1px solid #9bc2e6;
  background: #5b9bd5;
  color: #fff;
}

.date {
  padding: 2px 0 0 2px;
  border-right: 1px solid #5b9bd5;
  line-height: 17px;
  white-space: nowrap;
}

.total-title {
  padding-left: 6px;
  font-size: 11px;
}

.name {
  display: flex;
  justify-content: center;
  border-right: 1px solid #ababab;
  font-size: 11.500px;
}

.num {
  height: 20px;
  padding-left: 2px;
  border-bottom: 1px solid #d4d4d4;
  color: #444;
  font-size: 15px;
  font-weight: normal;
  text-align: center;
  line-height: 21px;
}

.num.sel {
  background: #e1e1e1;
  box-shadow: -1px 0 #217346, inset 1px 0 #217346;
  border-bottom-color: #ababab;
  color: #217346;
  font-size: 14.500px;
  font-weight: bold;
  line-height: 20px;
}

.cell,
.total {
  padding: 2px 2px 0 0;
  border: solid #d4d4d4;
  border-width: 0 1px 0 0;
  line-height: 17px;
  text-align: right;
}

.data > div:not(.num) {
  border-bottom: 1px solid #9bc2e6;
}

.band .cell,
.band .total {
  border-right-color: #ddebf7;
}

.band > div:not(.num) {
  background: #ddebf7;
}

.picked > .total {
  background: #c6c6c6;
  border-bottom-color: #7e97b0;
}

.picked.band > .total:not(.num) {
  background: #aab4bf;
}

.selection {
  position: absolute;
  left: 0;
  top: 119px;
  width: 63px;
  height: 363px;
  border: solid #217346;
  border-width: 2px 2px 2px 0;
  box-shadow: inset -1px -1px #fff;
}

.quick-analysis {
  position: absolute;
  left: 0;
  top: 462px;
  width: 24px;
  height: 24px;
  padding: 2px;
  border: 1px solid #217346;
  background: #fff;
}

/* sheet tabs */
.sheet-bar {
  display: flex;
  height: 27px;
  padding-left: 21px;
  background: #f5f5f5;
}

.h-btn {
  display: flex;
  align-items: center;
  justify-content: center;
  width: 15px;
  height: 15px;
  margin-top: 6px;
  border: 1px solid #ababab;
  background: #fff;
}

.left,
.right {
  border: 4px solid transparent;
  border-left: 0;
  border-right-color: #666;
}

.right {
  border: 4px solid transparent;
  border-right: 0;
  border-left-color: #666;
}

.h-track {
  width: 92px;
  height: 15px;
  margin-top: 6px;
  background: #e8e8e8;
}

.h-thumb {
  width: 386px;
  height: 15px;
  margin-top: 6px;
  border: 1px solid #ababab;
  background: #f0f0f0;
}

.bar-dots {
  margin: 6px 0 0 14px;
}

.add {
  margin: 4px 34px 0 491px;
}

.sheet-tab {
  height: 20px;
  margin-top: 3px;
  font-size: 12px;
  line-height: 20px;
}

.third {
  width: 57px;
  padding-left: 15px;
  border-left: 1px solid #ababab;
}

.current {
  width: 59px;
  height: 25px;
  margin-top: -1px;
  padding-left: 13px;
  border: solid #ababab;
  border-width: 0 1px;
  border-bottom: 2px solid #217346;
  background: #fff;
  color: #217346;
  font-weight: bold;
  line-height: 27px;
}

.first {
  width: 58px;
  padding-left: 16px;
  border-right: 1px solid #ababab;
}

.sheet-nav {
  display: flex;
  gap: 24px;
  margin: 9px 0 0 38px;
}

.sheet-nav .left {
  height: 0;
  border-right-color: #bbb;
}

.sheet-nav .right {
  height: 0;
  border-left-color: #bbb;
}

/* status bar */
.status-bar {
  display: flex;
  align-items: center;
  height: 23px;
  margin: 0 -1px;
  padding-left: 19px;
  background: #217346;
  color: #fff;
}

.status-bar > svg:first-of-type {
  margin-left: 20px;
}

.status-bar .view-breaks {
  margin: 0 24px 0 15px;
}

.view-normal {
  display: flex;
  align-items: center;
  justify-content: center;
  width: 38px;
  height: 21px;
  margin-left: 12px;
  background: #0a6332;
}

.sum {
  margin-left: 19px;
}

.status-bar .count {
  position: relative;
  left: 16px;
}

.status-bar .average {
  position: relative;
  left: 32px;
}

.status-bar .ready {
  position: relative;
  left: -9px;
}

.scroll-lock {
  position: relative;
  left: -30px;
}

/* taskbar */
.taskbar {
  display: flex;
  align-items: flex-start;
  height: 40px;
  border-top: 1px solid #10222f;
  box-shadow: inset 0 1px #8db4cf;
  background: linear-gradient(90deg, #1f5886 0, #2e6f9f 110px, #4688b2 330px, #3288c6 470px, #3b94d0 560px, #2b80c4 750px, #2272ba 870px, #1d64ab 1050px, #1c5798 1200px, #173961 1366px);
  color: #fff;
}

.show-desktop {
  width: 15px;
  height: 39px;
  border: 1px solid #7fa6c3;
  background: linear-gradient(100deg, #16436c, #3d78a5);
}

.clock {
  display: flex;
  flex-direction: column;
  align-items: center;
  width: 80px;
  padding-top: 4px;
}

.tray {
  margin: 9px 0 0 5px;
}

.lang {
  margin-top: 9px;
  margin-left: 11px;
  font-size: 12px;
}

.chevron {
  margin: 2px 0 0 10px;
  font: bold 16px/14px 'Liberation Sans', sans-serif;
}

.desktop-label {
  position: relative;
  left: 7px;
  margin-top: 11px;
}

.task {
  display: flex;
  align-items: center;
  justify-content: center;
  width: 58px;
  height: 39px;
}

.open {
  margin-right: 3px;
  border: 1px solid #a7cbe5;
  border-radius: 3px;
  background: linear-gradient(#8dbbe0, #3f86c1 45%, #286fae 50%, #3b85c3);
}

.shine {
  margin-right: 2px;
  background: linear-gradient(35deg, #2e76b4 30%, #a9cbe6 45%, #3b80bb 60%);
}

.task-edge {
  width: 4px;
  height: 39px;
  margin-right: 3px;
  border: solid #8cb6d6;
  border-width: 0 1px;
}

.explorer {
  width: 54px;
  margin-right: 18px;
}

.opera {
  width: 30px;
  margin-right: 18px;
}

.active {
  margin-right: 18px;
  background: linear-gradient(120deg, #d8e5ef, #8fb4d3 45%, #6f9fc9 55%, #a9c6de);
}

.access {
  width: 30px;
  margin-right: 32px;
}

.chrome {
  width: 30px;
  margin-right: 27px;
}

.app-letter {
  font: bold 15px 'Open Sans', sans-serif;
  fill: #fff;
}

.orb {
  margin-right: 7px;
}

/* mark laid over the bottom of the screen */
.watermark {
  position: absolute;
  left: 601px;
  top: 666px;
  display: flex;
  flex-direction: column;
  align-items: flex-start;
  width: 164px;
  color: rgba(205, 205, 205, 0.48);
}

.wm-ar {
  font: bold 48px/60px 'DejaVu Sans', sans-serif;
}

.wm-en {
  font: bold 26px/26px 'Liberation Sans', sans-serif;
}
</style>
